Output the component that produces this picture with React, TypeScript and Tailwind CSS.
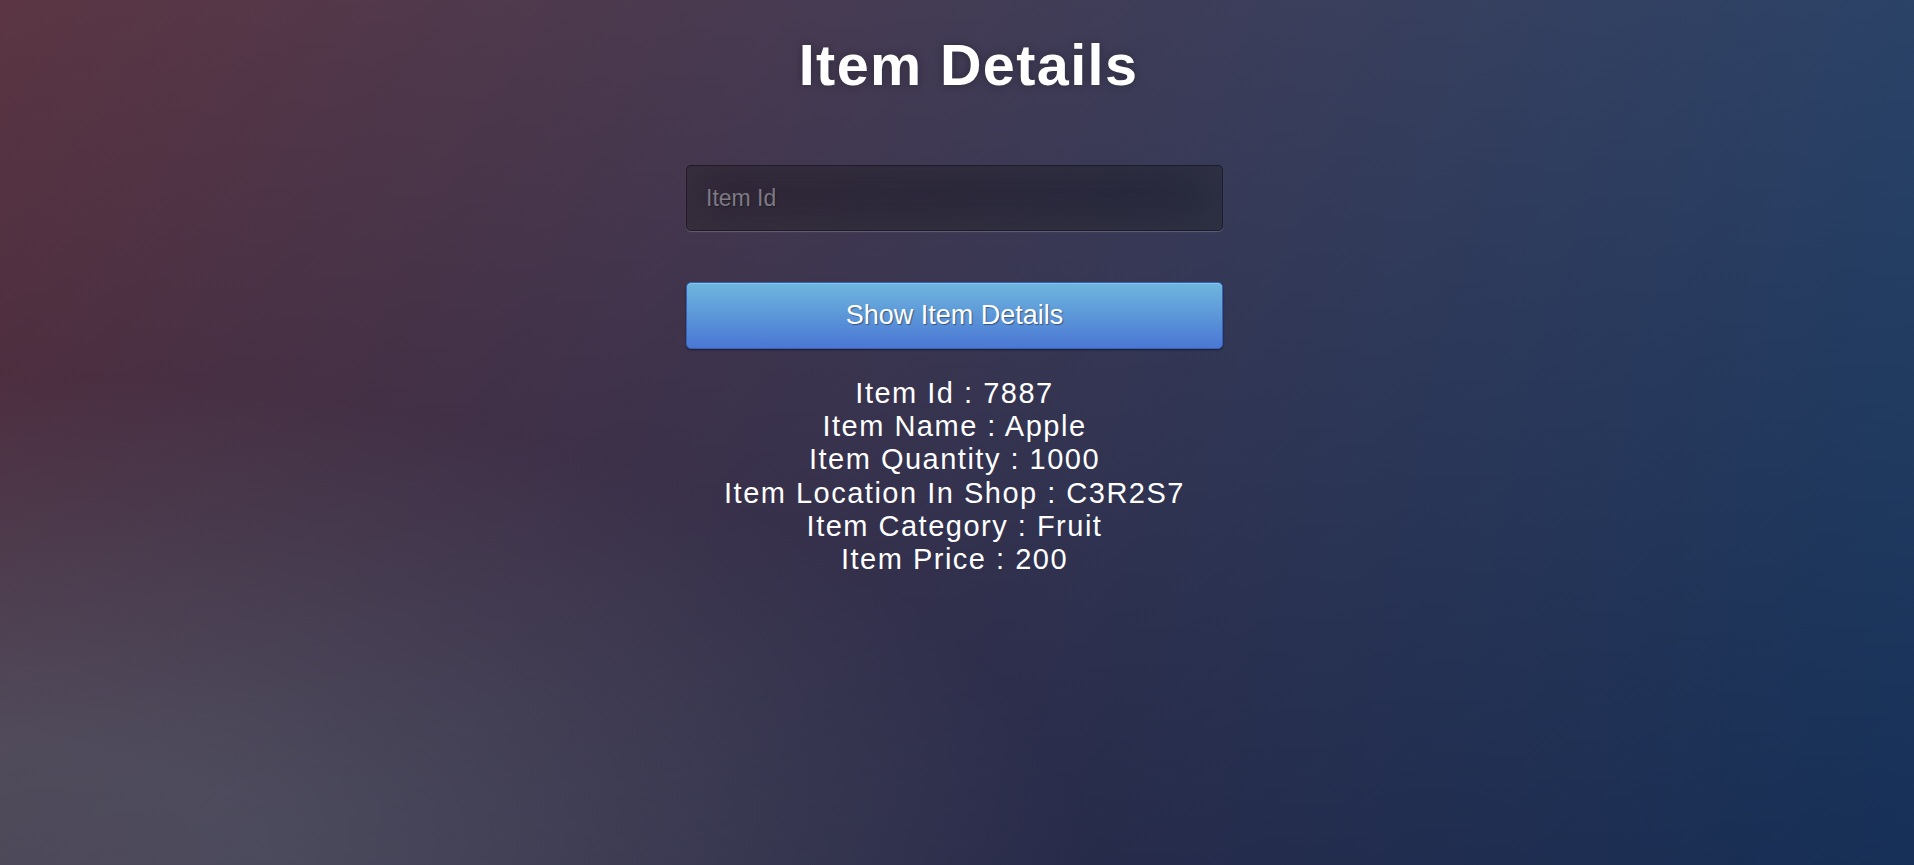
import React, { useState } from 'react';

interface Item {
  id: string;
  name: string;
  quantity: number;
  location: string;
  category: string;
  price: number;
}

const SAMPLE: Item = {
  id: '7887',
  name: 'Apple',
  quantity: 1000,
  location: 'C3R2S7',
  category: 'Fruit',
  price: 200,
};

const App: React.FC = () => {
  const [itemId, setItemId] = useState<string>('');
  const [item, setItem] = useState<Item | null>(SAMPLE);

  const handleShow = () => {
    // no backend here, just show the sample record
    setItem({ ...SAMPLE, id: itemId || SAMPLE.id });
  };

  return (
    <div className="h-[865px] w-full overflow-hidden bg-[#092756] bg-[radial-gradient(ellipse_farthest-corner_at_0%_100%,rgba(104,128,138,0.4)_10%,rgba(138,114,76,0)_40%),linear-gradient(to_bottom,rgba(57,173,219,0.25)_0%,rgba(42,60,87,0.4)_100%),linear-gradient(135deg,#670d10_0%,#092756_100%)] font-['Liberation_Sans',Arial,sans-serif] text-white">
      <div className="flex flex-col items-center pt-[32px] pr-[5px]">
        <h1 className="pl-[28px] text-[57.5px] leading-[66px] font-bold tracking-[1.4px] [text-shadow:0_0_10px_rgba(0,0,0,0.3)]">
          Item Details
        </h1>

        <input
          type="text"
          value={itemId}
          onChange={e => setItemId(e.target.value)}
          placeholder="Item Id"
          className="mt-[67px] h-[66px] w-[537px] rounded-[5px] border border-black/30 bg-black/30 px-[19px] text-[23px] text-white outline-none placeholder:text-[#7c7a84] [text-shadow:1px_1px_1px_rgba(0,0,0,0.3)] shadow-[inset_0_-5px_45px_rgba(100,100,100,0.2),0_1px_1px_rgba(255,255,255,0.2)]"
        />

        <button
          onClick={handleShow}
          className="mt-[51px] h-[67px] w-[537px] rounded-[5px] border border-[#3762bc] bg-[#4a77d4] bg-[linear-gradient(to_bottom,#6eb6de,#4a77d4)] text-[27px] text-white [text-shadow:1px_1px_1px_rgba(0,0,0,0.4)] shadow-[inset_0_1px_0_rgba(255,255,255,0.2),0_1px_2px_rgba(0,0,0,0.5)]"
        >
          Show Item Details
        </button>

        {item && (
          <div className="mt-[28px] flex flex-col items-center text-[29px] leading-[33.2px] tracking-[1.5px]">
            <p>Item Id : {item.id}</p>
            <p>Item Name : {item.name}</p>
            <p>Item Quantity : {item.quantity}</p>
            <p>Item Location In Shop : {item.location}</p>
            <p>Item Category : {item.category}</p>
            <p>Item Price : {item.price}</p>
          </div>
        )}
      </div>
    </div>
  );
};

export default App;
